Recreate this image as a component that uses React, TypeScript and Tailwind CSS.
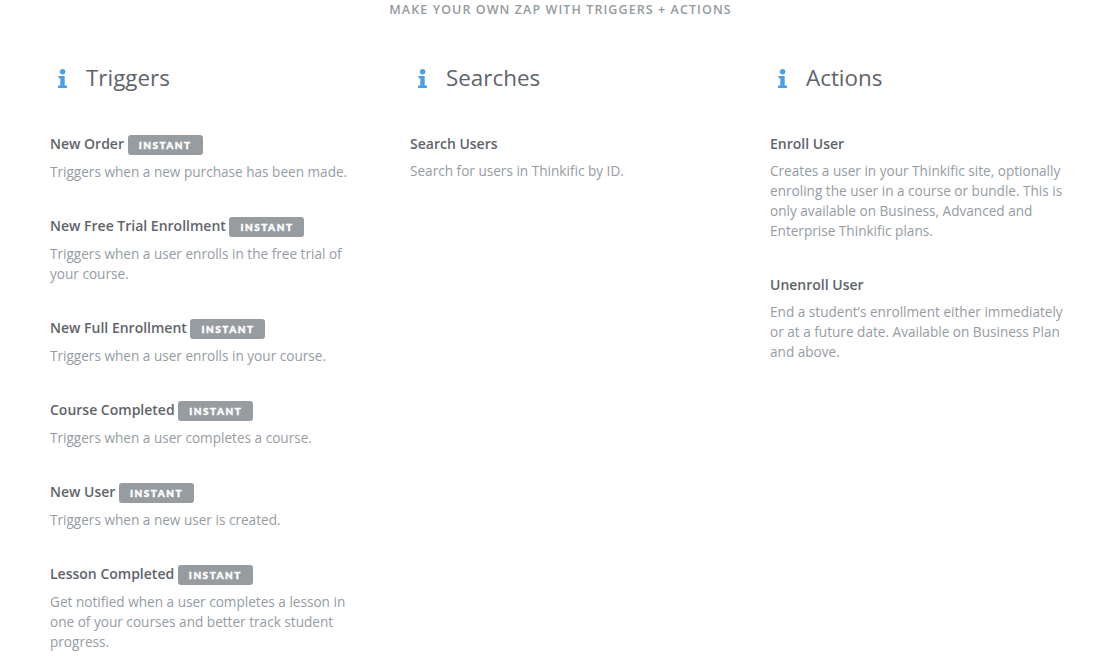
import React from "react";

function InfoIcon() {
  return (
    <svg width="9" height="19" viewBox="0 0 9 19" className="shrink-0 text-[#4a9fe6]" fill="currentColor">
      <circle cx="4.6" cy="2.7" r="2.7" />
      <path d="M0.4 7h6.3v9.6H9V19H0v-2.4h2.3V9.3H0.4z" />
    </svg>
  );
}

function Badge() {
  return (
    <span className="mt-px ml-[3.65px] inline-flex h-5 w-[75px] items-center justify-center rounded-[3px] bg-[#969ca0] text-[10px] font-black tracking-[1.5px] text-white font-['Lato',sans-serif] [-webkit-text-stroke:0.4px_white]">
      INSTANT
    </span>
  );
}

type Item = { title: string; desc: string[]; instant?: boolean };

function Entry({ title, desc, instant }: Item) {
  return (
    <div className="mb-[34px]">
      <div className="mb-[7px] flex items-start text-sm leading-5 font-semibold text-[#5f646b]">
        <span>{title}</span>
        {instant && <Badge />}
      </div>
      <div className="text-[13.6px] leading-5 text-[#969ca3]">
        {desc.map((l) => (
          <div key={l} className="whitespace-nowrap">{l}</div>
        ))}
      </div>
    </div>
  );
}

function Column({ title, items }: { title: string; items: Item[] }) {
  return (
    <div className="w-[360px] shrink-0">
      <div className="mb-[40px] flex h-8 items-center pl-2">
        <InfoIcon />
        <h2 className="ml-[19px] text-[22.4px] leading-8 text-[#5f646b]">{title}</h2>
      </div>
      {items.map((i) => (
        <Entry key={i.title} {...i} />
      ))}
    </div>
  );
}

const triggers: Item[] = [
  { title: "New Order", instant: true, desc: ["Triggers when a new purchase has been made."] },
  { title: "New Free Trial Enrollment", instant: true, desc: ["Triggers when a user enrolls in the free trial of", "your course."] },
  { title: "New Full Enrollment", instant: true, desc: ["Triggers when a user enrolls in your course."] },
  { title: "Course Completed", instant: true, desc: ["Triggers when a user completes a course."] },
  { title: "New User", instant: true, desc: ["Triggers when a new user is created."] },
  { title: "Lesson Completed", instant: true, desc: ["Get notified when a user completes a lesson in", "one of your courses and better track student", "progress."] },
];
const searches: Item[] = [{ title: "Search Users", desc: ["Search for users in Thinkific by ID."] }];
const actions: Item[] = [
  { title: "Enroll User", desc: ["Creates a user in your Thinkific site, optionally", "enroling the user in a course or bundle. This is", "only available on Business, Advanced and", "Enterprise Thinkific plans."] },
  { title: "Unenroll User", desc: ["End a student’s enrollment either immediately", "or at a future date. Available on Business Plan", "and above."] },
];

export default function App() {
  return (
    <div className="h-[670px] w-[1108px] overflow-hidden bg-white font-['Open_Sans',sans-serif]">
      <div className="flex h-[62px] justify-center pt-[2px] pl-[13px]">
        <p className="text-[12.5px] leading-4 font-semibold tracking-[1.08px] text-[#959a9e]">
          MAKE YOUR OWN ZAP WITH TRIGGERS + ACTIONS
        </p>
      </div>
      <div className="flex pl-[50px]">
        <Column title="Triggers" items={triggers} />
        <Column title="Searches" items={searches} />
        <Column title="Actions" items={actions} />
      </div>
    </div>
  );
}
